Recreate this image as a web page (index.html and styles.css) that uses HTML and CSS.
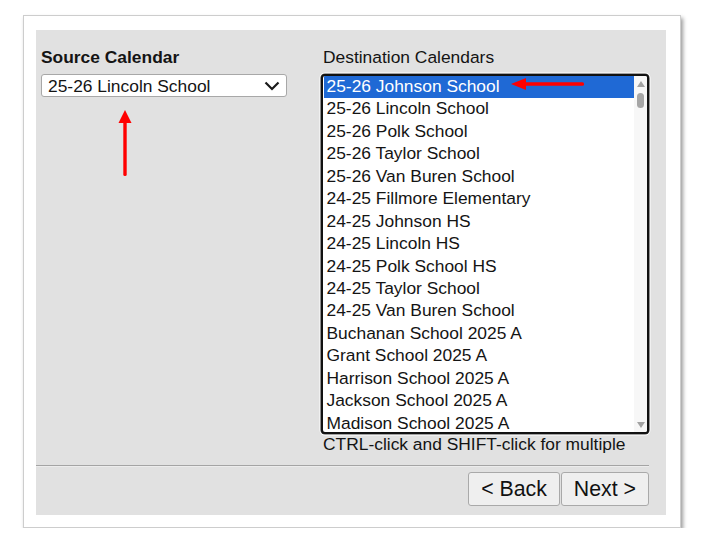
FILE: index.html
```
<!DOCTYPE html>
<html>
<head>
<meta charset="utf-8">
<link rel="stylesheet" href="styles.css">
</head>
<body>
<div class="card">
  <div class="panel">
    <div class="columns">
      <div class="col-left">
        <div class="label-bold">Source Calendar</div>
        <div class="select">
          <span class="select-text">25-26 Lincoln School</span>
          <svg class="chevron" width="16" height="10" viewBox="0 0 16 10"><polyline points="1.5,1.5 8,8 14.5,1.5" fill="none" stroke="#1a1a1a" stroke-width="2.2"/></svg>
        </div>
        <svg class="arrow-up" width="16" height="68" viewBox="0 0 16 68"><rect x="6.3" y="10" width="3.4" height="56" rx="1.5" fill="#f00"/><polygon points="8,0 14.5,13 1.5,13" fill="#f00"/></svg>
      </div>
      <div class="col-right">
        <div class="label">Destination Calendars</div>
        <div class="listbox">
          <div class="rows">
            <div class="row selected">25-26 Johnson School</div>
            <div class="row">25-26 Lincoln School</div>
            <div class="row">25-26 Polk School</div>
            <div class="row">25-26 Taylor School</div>
            <div class="row">25-26 Van Buren School</div>
            <div class="row">24-25 Fillmore Elementary</div>
            <div class="row">24-25 Johnson HS</div>
            <div class="row">24-25 Lincoln HS</div>
            <div class="row">24-25 Polk School HS</div>
            <div class="row">24-25 Taylor School</div>
            <div class="row">24-25 Van Buren School</div>
            <div class="row">Buchanan School 2025 A</div>
            <div class="row">Grant School 2025 A</div>
            <div class="row">Harrison School 2025 A</div>
            <div class="row">Jackson School 2025 A</div>
            <div class="row">Madison School 2025 A</div>
          </div>
          <div class="scrollbar">
            <svg class="sb-up" width="8" height="6" viewBox="0 0 8 6"><polygon points="4,0 8,6 0,6" fill="#a3a3a3"/></svg>
            <div class="thumb"></div>
            <div class="sb-fill"></div>
            <svg class="sb-down" width="8" height="6" viewBox="0 0 8 6"><polygon points="0,0 8,0 4,6" fill="#a3a3a3"/></svg>
          </div>
        </div>
        <div class="hint">CTRL-click and SHIFT-click for multiple</div>
        <svg class="arrow-left" width="74" height="14" viewBox="0 0 74 14"><rect x="12" y="5.3" width="61" height="3.4" rx="1.5" fill="#f00"/><polygon points="0,7 15,1 15,13" fill="#f00"/></svg>
      </div>
    </div>
    <div class="divider"></div>
    <div class="buttons">
      <div class="btn">&lt; Back</div>
      <div class="btn">Next &gt;</div>
    </div>
  </div>
</div>
</body>
</html>
```
FILE: styles.css
```
* { box-sizing: border-box; }
body {
  margin: 0;
  background: #fff;
  font-family: "Liberation Sans", Arial, sans-serif;
  color: #141414;
}
.card {
  margin: 15px 0 0 23px;
  width: 658px;
  height: 513px;
  background: #fff;
  border: 1px solid #cdcdcd;
  box-shadow: 2px 3px 4px rgba(0,0,0,0.4);
  padding: 14px 14px 12px 12px;
}
.panel {
  background: #e1e1e1;
  height: 485px;
  padding: 17px 17px 0 5px;
  display: flex;
  flex-direction: column;
}
.columns {
  display: flex;
}
.col-left {
  width: 280px;
  position: relative;
}
.col-right {
  width: 328px;
  position: relative;
}
.label-bold {
  font-weight: bold;
  font-size: 17.4px;
  line-height: 20px;
}
.label {
  font-size: 17.4px;
  line-height: 20px;
  padding-left: 2px;
}
.select {
  margin-top: 7px;
  width: 246px;
  height: 23px;
  background: #fff;
  border: 1px solid #a8a8a8;
  border-radius: 3px;
  display: flex;
  align-items: center;
  justify-content: space-between;
  padding: 0 6px 0 6px;
  font-size: 17.4px;
  line-height: 20px;
}
.select-text { padding-top: 1px; }
.chevron { display: block; }
.arrow-up {
  position: absolute;
  left: 76px;
  top: 63px;
}
.listbox {
  margin-top: 7px;
  width: 328px;
  height: 360px;
  border: 2px solid #111;
  border-radius: 4px;
  box-shadow: 0 0 0 0.6px #444, 0 0 0 1.5px #fff;
  background: #fff;
  display: flex;
  overflow: hidden;
}
.rows {
  flex: 1;
  padding-left: 1px;
  overflow: hidden;
}
.row {
  height: 22.45px;
  line-height: 20px;
  padding-left: 2.5px;
  font-size: 17.4px;
  white-space: nowrap;
}
.row.selected {
  background: #1f69d5;
  color: #fff;
}
.scrollbar {
  width: 13px;
  background: #f7f7f7;
  display: flex;
  flex-direction: column;
  align-items: center;
  padding: 5px 0 4px 0;
}
.sb-up { display: block; }
.thumb {
  margin-top: 6px;
  width: 7px;
  height: 15px;
  border-radius: 4px;
  background: #a6a6a6;
}
.sb-fill { flex: 1; }
.sb-down { display: block; }
.hint {
  margin-top: 1px;
  font-size: 17.4px;
  line-height: 18px;
  padding-left: 2px;
}
.arrow-left {
  position: absolute;
  left: 190px;
  top: 30px;
}
.divider {
  margin-top: 12px;
  margin-left: -5px;
  height: 2px;
  border-top: 1px solid #a4a4a4;
  border-bottom: 1px solid #ececec;
}
.buttons {
  margin-top: 5px;
  display: flex;
  justify-content: flex-end;
  gap: 1px;
}
.btn {
  height: 34px;
  padding: 0 12px;
  background: #efefef;
  border: 1px solid #a9a9a9;
  border-radius: 3px;
  font-size: 21.3px;
  line-height: 24px;
  display: flex;
  align-items: center;
  color: #111;
}
```
